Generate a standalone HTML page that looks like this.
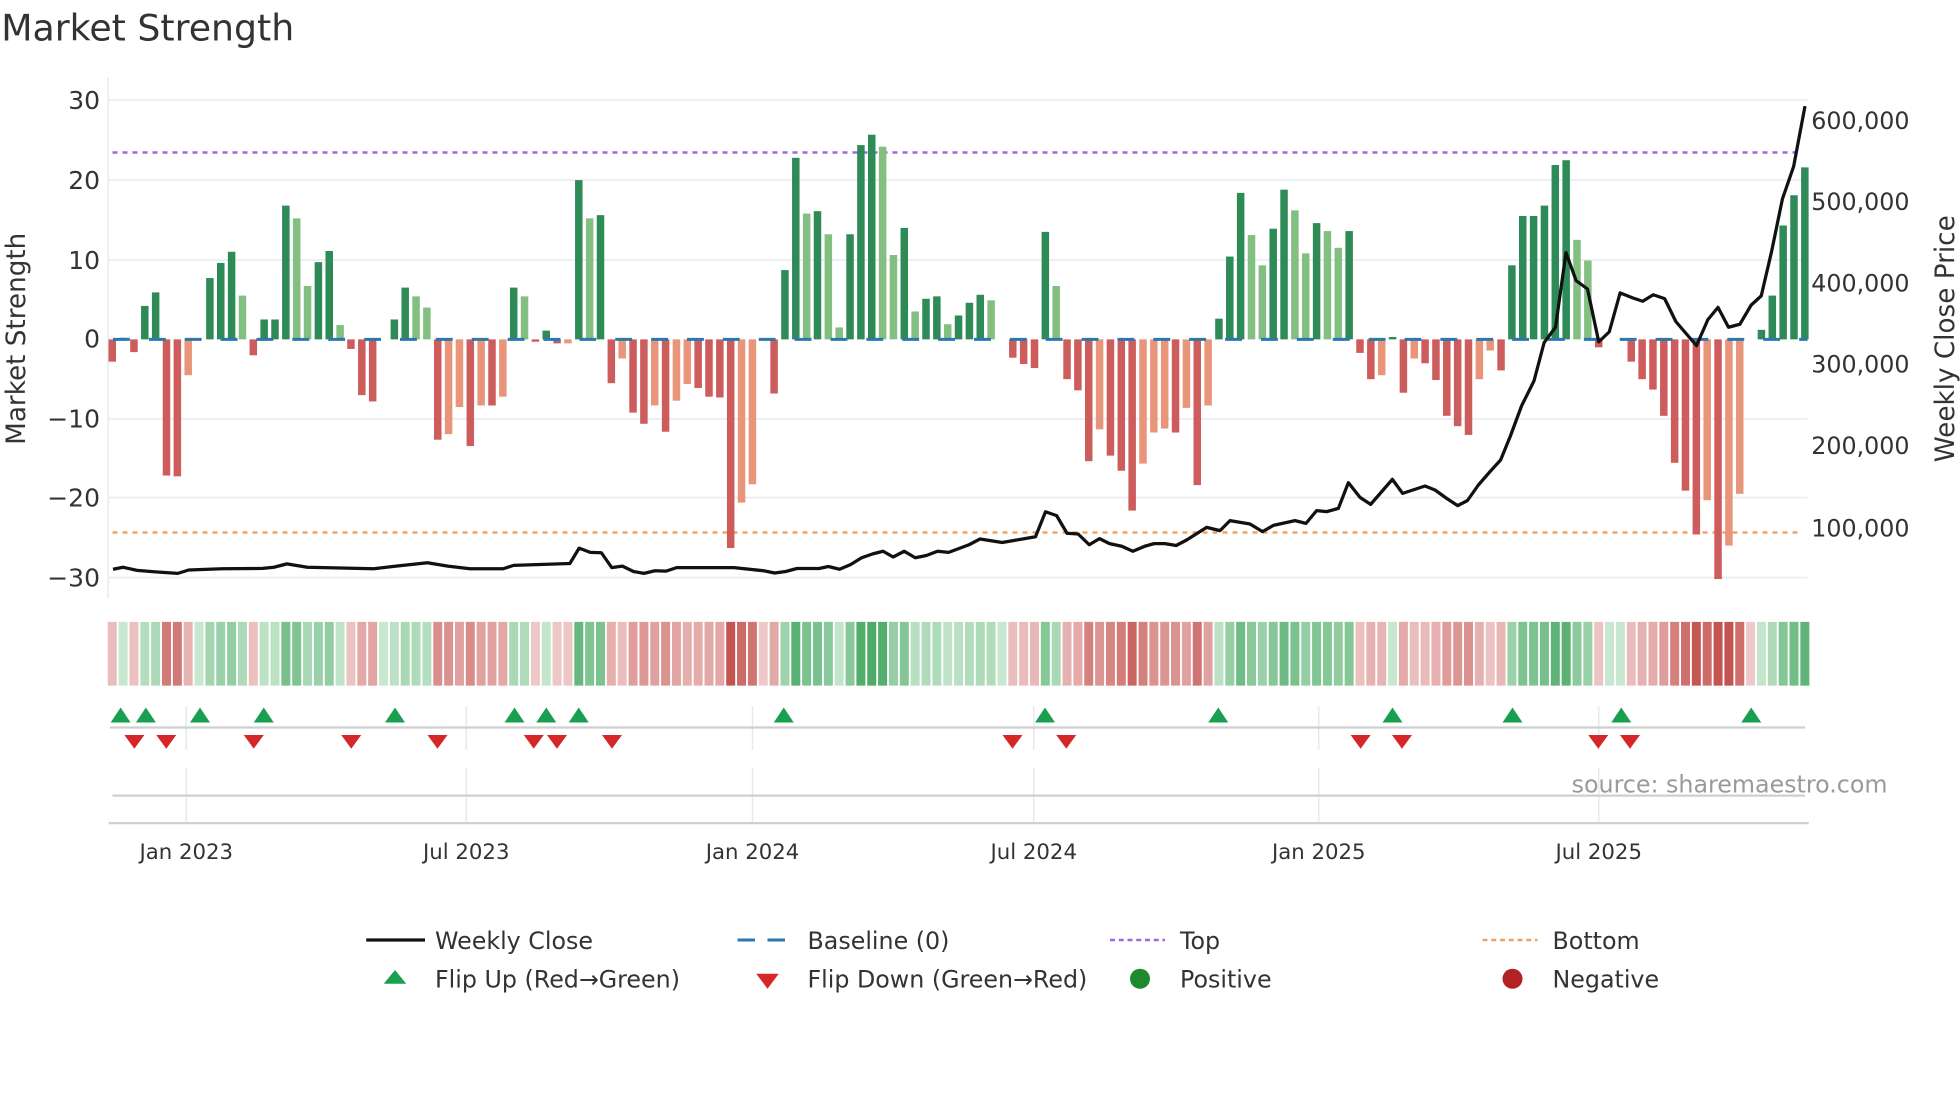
<!DOCTYPE html>
<html><head><meta charset="utf-8"><style>
html,body{margin:0;padding:0;background:#fff;width:1960px;height:1102px;overflow:hidden}
svg{display:block}
text{font-family:"DejaVu Sans","Liberation Sans",sans-serif;fill:#333}
</style></head><body>
<svg id="s" width="1960" height="1102" viewBox="0 0 1568 881.6" xmlns="http://www.w3.org/2000/svg">
<rect width="1568" height="882" fill="#fff"/>
<text x="1" y="32.5" font-size="29" fill="#333">Market Strength</text>
<g stroke="#e8ebf2" stroke-width="1.3">
<line x1="86" y1="80" x2="1446" y2="80"/><line x1="86" y1="144" x2="1446" y2="144"/>
<line x1="86" y1="208" x2="1446" y2="208"/><line x1="86" y1="335" x2="1446" y2="335"/>
<line x1="86" y1="398" x2="1446" y2="398"/><line x1="86" y1="462" x2="1446" y2="462"/>
<line x1="86.5" y1="62" x2="86.5" y2="479"/>
</g>
<g font-size="20" text-anchor="end">
<text x="80" y="87">30</text><text x="80" y="151">20</text><text x="80" y="215">10</text>
<text x="80" y="278">0</text><text x="80" y="342">−10</text><text x="80" y="405">−20</text><text x="80" y="469">−30</text>
</g>
<g font-size="19">
<text x="1449" y="103">600,000</text><text x="1449" y="168">500,000</text><text x="1449" y="233">400,000</text>
<text x="1449" y="298">300,000</text><text x="1449" y="363">200,000</text><text x="1449" y="429">100,000</text>
</g>
<text transform="translate(20,271) rotate(-90)" font-size="21" text-anchor="middle">Market Strength</text>
<text transform="translate(1563,271) rotate(-90)" font-size="21" text-anchor="middle">Weekly Close Price</text>
<line x1="90" y1="122" x2="1440" y2="122" stroke="#9b6bdc" stroke-width="2" stroke-dasharray="4 4"/>
<line x1="90" y1="426" x2="1440" y2="426" stroke="#f0a462" stroke-width="2" stroke-dasharray="4 4"/>
<g id="bars"></g>
<line x1="90.4" y1="271.5" x2="1446" y2="271.5" stroke="#2a78ad" stroke-width="2.4" stroke-dasharray="13.5 15.2"/>
<polyline id="price" fill="none" stroke="#111" stroke-width="2.6" stroke-linejoin="round"/>
<g id="heat"></g>
<g stroke="#e6e9ef" stroke-width="1.2">
<line x1="149" y1="565" x2="149" y2="600"/><line x1="373" y1="565" x2="373" y2="600"/><line x1="602" y1="565" x2="602" y2="600"/>
<line x1="827" y1="565" x2="827" y2="600"/><line x1="1055" y1="565" x2="1055" y2="600"/><line x1="1279" y1="565" x2="1279" y2="600"/>
<line x1="149" y1="614" x2="149" y2="658"/><line x1="373" y1="614" x2="373" y2="658"/><line x1="602" y1="614" x2="602" y2="658"/>
<line x1="827" y1="614" x2="827" y2="658"/><line x1="1055" y1="614" x2="1055" y2="658"/><line x1="1279" y1="614" x2="1279" y2="658"/>
</g>
<line x1="88" y1="582" x2="1444" y2="582" stroke="#cfcfcf" stroke-width="1.8"/>
<line x1="90" y1="636.5" x2="1444" y2="636.5" stroke="#cfcfcf" stroke-width="1.8"/>
<line x1="87" y1="658.5" x2="1447" y2="658.5" stroke="#cfcfcf" stroke-width="1.8"/>
<g id="marks"></g>
<text x="1510" y="634" font-size="19" text-anchor="end" style="fill:#9a9a9a">source: sharemaestro.com</text>
<g font-size="17" text-anchor="middle">
<text x="149" y="687">Jan 2023</text><text x="373" y="687">Jul 2023</text><text x="602" y="687">Jan 2024</text>
<text x="827" y="687">Jul 2024</text><text x="1055" y="687">Jan 2025</text><text x="1279" y="687">Jul 2025</text>
</g>
<g font-size="19">
<line x1="293" y1="752" x2="340" y2="752" stroke="#111" stroke-width="2.6"/>
<text x="348" y="759">Weekly Close</text>
<line x1="590" y1="752" x2="634" y2="752" stroke="#2a78ad" stroke-width="2.4" stroke-dasharray="14 10"/>
<text x="646" y="759">Baseline (0)</text>
<line x1="888" y1="752" x2="932" y2="752" stroke="#9b6bdc" stroke-width="2" stroke-dasharray="4 3"/>
<text x="944" y="759">Top</text>
<line x1="1186" y1="752" x2="1230" y2="752" stroke="#f0a462" stroke-width="2" stroke-dasharray="4 3"/>
<text x="1242" y="759">Bottom</text>
<polygon points="316,776 307,787 325,787" fill="#1a9e50"/>
<text x="348" y="790">Flip Up (Red→Green)</text>
<polygon points="605,779 623,779 614,791" fill="#d62728"/>
<text x="646" y="790">Flip Down (Green→Red)</text>
<circle cx="912" cy="783" r="8" fill="#1e8a2e"/>
<text x="944" y="790">Positive</text>
<circle cx="1210" cy="783" r="8" fill="#b22222"/>
<text x="1242" y="790">Negative</text>
</g>
</svg>
<script>
var D="-2.8R 0.2G -1.6R 4.2G 5.9G -17.1R -17.2R -4.5r 0G 7.7G 9.6G 11G 5.5g -2R 2.5G 2.5G 16.8G 15.2g 6.7g 9.7G 11.1G 1.8g -1.2R -7R -7.8R 0G 2.5G 6.5G 5.4g 4g -12.6R -11.9r -8.5r -13.4R -8.3r -8.3R -7.2r 6.5G 5.4g -0.3R 1.1G -0.5M -0.5r 20G 15.2g 15.6G -5.5R -2.4r -9.2R -10.6R -8.3r -11.6R -7.7r -5.6r -6.1R -7.2R -7.3R -26.2R -20.5r -18.2r 0R -6.8R 8.7G 22.8G 15.8g 16.1G 13.2g 1.5g 13.2G 24.4G 25.7G 24.2g 10.6g 14G 3.5g 5.1G 5.4G 1.9g 3G 4.6G 5.6G 4.9g 0G -2.3R -3.1R -3.6R 13.5G 6.7g -5R -6.4R -15.3R -11.3r -14.6R -16.5R -21.5R -15.6r -11.7r -11.2r -11.7R -8.6r -18.3R -8.3r 2.6G 10.4G 18.4G 13.1g 9.3g 13.9G 18.8G 16.2g 10.8g 14.6G 13.6g 11.5g 13.6G -1.7R -5R -4.5r 0.3G -6.7R -2.4r -3R -5.1R -9.6R -10.9R -12R -5r -1.4r -3.9R 9.3G 15.5G 15.5G 16.8G 21.9G 22.5G 12.5g 9.9g -1R 0G 0G -2.8R -5R -6.3R -9.6R -15.5R -19R -24.5R -20.2r -30.1R -25.9r -19.4r 0R 1.2G 5.5G 14.3G 18.1G 21.6G".split(" ");
var C={G:"#2e8a57",g:"#82bf80",R:"#cd5c5c",r:"#e8957a",M:"#b0607a"};
var NS="http://www.w3.org/2000/svg",bars=document.getElementById("bars"),heat=document.getElementById("heat");
function el(p,t,a){var e=document.createElementNS(NS,t);for(var k in a)e.setAttribute(k,a[k]);p.appendChild(e);return e;}
function mix(a,b,t){var r=[];for(var i=0;i<3;i++)r.push(Math.round(a[i]+(b[i]-a[i])*t));return "rgb("+r.join(",")+")";}
var prevNeg=true;
D.forEach(function(s,i){
 var v=parseFloat(s),c=s.slice(-1),cx=89.8+i*8.68,y0=271.5,h=v*6.37;
 if(Math.abs(v)>0.05) el(bars,"rect",{x:cx-3,y:h>0?y0-h:y0,width:6,height:Math.abs(h),fill:C[c]});
 var neg=v<0||(v==0&&c!="G"&&prevNeg); if(v!=0)prevNeg=v<0;
 var t=Math.min(1,0.1+Math.abs(v)/28);
 var col=neg?mix([243,214,214],[196,84,80],t):mix([214,238,220],[78,172,104],t);
 el(heat,"rect",{x:cx-3.6,y:497.5,width:7.2,height:51,fill:col});
});
var P=[[90.4,455.4],[98.4,453.8],[109.6,456.3],[124.4,457.5],[142.2,458.7],[151,456],[177.7,455],[210.2,454.7],[219.1,453.8],[229.5,451.1],[245.8,453.8],[299,455],[316.8,452.9],[342,450.2],[358.2,452.9],[376,455],[402.6,455],[410.9,452.3],[455.9,450.8],[463.3,438.5],[472.2,441.9],[481.1,442.2],[489.4,454.1],[497.9,452.9],[506.8,457.2],[515.1,458.7],[524,456.6],[532.9,456.9],[541.3,454.1],[587.2,454.1],[610.9,456.6],[619.8,458.4],[628.6,457.2],[637.5,454.8],[655.3,454.8],[662.7,453.2],[671.6,455.4],[680.4,451.7],[689.3,446.2],[698.2,443.1],[706.5,441],[714.5,445.6],[723.4,441],[732.2,446.2],[741.1,444.4],[750,441],[758.9,441.9],[767.2,438.8],[775.2,435.8],[784,431.2],[801.8,434],[828.4,429.4],[836.4,409.4],[845.3,412.5],[853.6,426.6],[862.5,427.2],[871.4,435.8],[879.6,430.9],[887.6,434.9],[897.4,437],[906.3,441],[915.8,437],[923.2,434.9],[932,434.9],[940.9,436.4],[949.3,432],[965.3,421.9],[976,424.5],[984,416.5],[1000,419.2],[1010,425.3],[1018.7,420.3],[1036,416.5],[1044.8,418.7],[1053.3,408.5],[1061.3,409.3],[1070.7,406.7],[1078.7,386.1],[1088,397.9],[1096.5,403.5],[1113.9,383.5],[1122.1,394.7],[1140,388.8],[1148,392],[1157.3,398.7],[1166.1,404.5],[1173.9,400.5],[1182.7,388],[1192,377.3],[1200.5,368],[1208.2,349.1],[1217.3,324.6],[1227.2,304.7],[1235.3,274.1],[1244.4,261.8],[1252.8,202.1],[1260.9,224.5],[1270,231.2],[1279,273.5],[1287.4,265.5],[1296.1,234.3],[1306.1,238.3],[1314.2,241],[1322.6,235.8],[1331.7,238.9],[1340.7,257.3],[1357.2,276.5],[1366.3,255.7],[1374.4,245.9],[1382.8,261.8],[1391.9,259.4],[1400.9,244.1],[1409,236.7],[1417.4,200.6],[1425.9,159.3],[1434.9,133.2],[1444,84.9]];
document.getElementById("price").setAttribute("points",P.map(function(p){return p.join(",")}).join(" "));
var m=document.getElementById("marks");
[96.5,116.7,160,211,316,411.6,437,463,627,836,974.6,1114,1210,1297,1401].forEach(function(x){
 el(m,"polygon",{points:(x)+",566 "+(x-8)+",578 "+(x+8)+",578",fill:"#1a9e50"});});
[107.5,133,203,281,350,427,445.6,489.6,810,853,1088.5,1121.6,1278.6,1304].forEach(function(x){
 el(m,"polygon",{points:(x-8)+",588 "+(x+8)+",588 "+x+",599",fill:"#d62728"});});
</script>
</body></html>
